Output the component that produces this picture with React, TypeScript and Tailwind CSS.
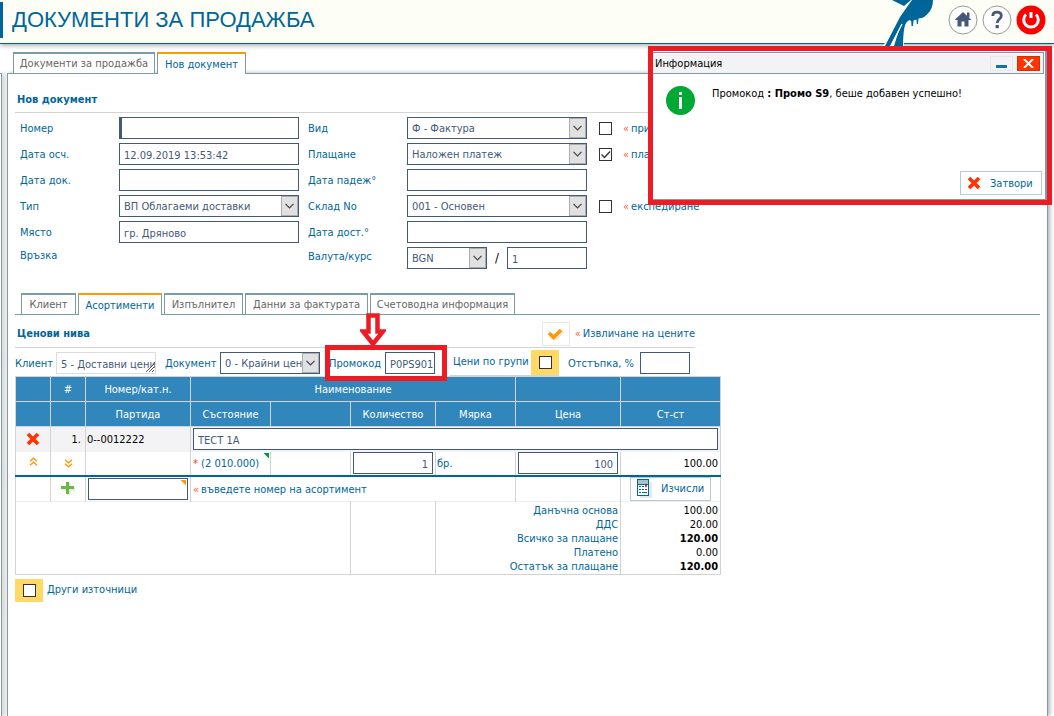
import type { ReactNode } from "react";

const field =
  "h-[22px] border border-[#44597a] bg-white px-1 pt-[2px] text-[11px] text-[#44597a] outline-none";

const formTabs = [
  { label: "Клиент", width: "w-[55px]" },
  { label: "Асортименти", width: "w-[84px]", active: true },
  { label: "Изпълнител", width: "w-[79px]" },
  { label: "Данни за фактурата", width: "w-[123px]" },
  { label: "Счетоводна информация", width: "w-[145px]" },
];

const totals = [
  { label: "Данъчна основа", value: "100.00" },
  { label: "ДДС", value: "20.00" },
  { label: "Всичко за плащане", value: "120.00", bold: true },
  { label: "Платено", value: "0.00" },
  { label: "Остатък за плащане", value: "120.00", bold: true },
];

function Tab({ label, width, active }: { label: string; width: string; active?: boolean }) {
  return (
    <button
      type="button"
      className={`h-[22px] whitespace-nowrap border-x border-t-2 border-x-[#7b9ba8] pt-[2px] text-center ${width} ${
        active
          ? "border-t-[#ff9900] bg-white text-[#006699]"
          : "border-b border-b-[#7b9ba8] border-t-[#7b9ba8] bg-white text-[#666]"
      }`}
    >
      {label}
    </button>
  );
}

function Select({ id, value, width }: { id: string; value: string; width: string }) {
  return (
    <span className={`relative inline-block h-[22px] shrink-0 ${width}`}>
      <select
        id={id}
        className="h-[22px] w-full appearance-none border border-[#44597a] bg-white pt-[3px] pr-4 pl-1 text-[11px] text-[#44597a] outline-none"
      >
        <option>{value}</option>
      </select>
      <span className="pointer-events-none absolute top-px right-px flex h-5 w-[17px] items-center justify-center border border-[#adadad] bg-[#e1e1e1]">
        <svg width="9" height="6" viewBox="0 0 9 6" fill="none" stroke="#444" strokeWidth="1.2">
          <path d="M.5.8l4 4 4-4" />
        </svg>
      </span>
    </span>
  );
}

function Check({ id, checked }: { id: string; checked?: boolean }) {
  return (
    <span className="relative inline-block size-[13px] shrink-0">
      <input
        id={id}
        type="checkbox"
        defaultChecked={checked}
        className="peer block size-[13px] appearance-none border border-[#333] bg-white"
      />
      <svg
        viewBox="0 0 13 13"
        fill="none"
        stroke="#333"
        strokeWidth="1.4"
        className="pointer-events-none absolute inset-0 hidden peer-checked:block"
      >
        <path d="M2.5 6.5l3 3 5.5-6" />
      </svg>
    </span>
  );
}

function Hint({ htmlFor, children }: { htmlFor?: string; children: ReactNode }) {
  return (
    <label htmlFor={htmlFor} className="whitespace-nowrap pt-[2px]">
      <span className="mr-[2px] text-[#ff5a1f]">«</span>
      {children}
    </label>
  );
}

function CrossIcon() {
  return (
    <svg width="15" height="15" viewBox="0 0 15 15" fill="none" strokeWidth="3.6">
      <path d="M3 3l10 10M13 3L3 13" stroke="#e8e8ea" />
      <path d="M2 2l10 10M12 2L2 12" stroke="#ff3300" />
    </svg>
  );
}

function Chevrons({ down }: { down?: boolean }) {
  return (
    <svg
      width="9"
      height="9"
      viewBox="0 0 9 9"
      fill="none"
      stroke="#ff9900"
      strokeWidth="1.4"
      className={down ? "rotate-180" : ""}
    >
      <path d="M1 4.2l3.5-3 3.5 3M1 8.2l3.5-3 3.5 3" />
    </svg>
  );
}

function CalcIcon() {
  return (
    <svg width="15" height="19" viewBox="0 0 15 19" shapeRendering="crispEdges">
      <path d="M3 3h12v16H3z" fill="#e8e8ea" />
      <path d="M0 0h12v17H0z" fill="#006699" />
      <path d="M1 6h10v10H1z" fill="#fff" />
      <path d="M1 1h10v4H1z" fill="#a3c2d3" />
      <path
        d="M2 7h2v1H2zM5 7h2v1H5zM2 10h2v1H2zM5 10h2v1H5zM8 10h2v1H8zM2 13h2v1H2zM5 13h5v1H5z"
        fill="#006699"
      />
      <path d="M8 6h2v2H8z" fill="#ff3300" />
    </svg>
  );
}

function Header() {
  return (
    <header className="relative flex h-11 items-center justify-between border-b border-[#006699] bg-[#fdfff7] pr-2 shadow-[0_1px_5px_rgba(0,0,0,0.4)]">
      <h1 className="mb-1 flex h-9 items-center border-l-[3px] border-[#006699] pl-[9px] font-['Liberation_Sans',Arial,sans-serif] text-[22px] text-[#006699]">
        ДОКУМЕНТИ ЗА ПРОДАЖБА
      </h1>
      <div className="flex items-center gap-1">
        {/* Bird with its tail over the header line */}
        <svg width="56" height="46" viewBox="0 0 56 46" className="mr-2 -mb-[3px]">
          <path d="M3 46L9 36 24 36 24 46z" fill="#fdfff7" />
          <path d="M12 0L24 6 31 0z" fill="#006699" />
          <path
            d="M32 0H53C53 6 51 11 47 14.500 44 17.500 41 18.500 38.500 18.500L38 24 36.800 24 36.500 19.500 33.500 20.500 33 26 31.500 26 31.300 21.500 30 20C27.500 20.500 25.500 23 24.500 27 23.500 32 23 39 23 46H14L20 27 10 46H5L20 17 27 7z"
            fill="#006699"
          />
          <path d="M22 24L11 46" stroke="#fdfff7" strokeWidth="1.200" />
        </svg>
        <button type="button" aria-label="Начало" className="mb-1">
          <svg width="30" height="30" viewBox="0 0 30 30">
            <circle cx="15" cy="15" r="14" fill="#fff" stroke="#999" />
            <path d="M15 7l8.500 8H20.500v6.500h-4v-5h-3v5h-4V15h-3z" fill="#44597a" />
            <path d="M19 7.500h2.500v5H19z" fill="#44597a" />
          </svg>
        </button>
        <button type="button" aria-label="Помощ" className="mb-1">
          <svg width="30" height="30" viewBox="0 0 30 30" fill="none">
            <circle cx="15" cy="15" r="14" fill="#fff" stroke="#999" />
            <path
              d="M10.800 11C10.800 8.500 12.500 7.200 15 7.200S19.300 8.600 19.300 10.800C19.300 14 15.200 14 15.200 18"
              stroke="#44597a"
              strokeWidth="2.800"
            />
            <path d="M13.600 20h3.200v3.200h-3.200z" fill="#44597a" />
          </svg>
        </button>
        <button type="button" aria-label="Изход" className="mb-1">
          <svg width="30" height="30" viewBox="0 0 30 30" fill="none">
            <circle cx="15" cy="15" r="14.500" fill="#f00" />
            <path d="M10 9.500a7.300 7.300 0 1 0 10 0" stroke="#fff" strokeWidth="3" />
            <path d="M15 7v6" stroke="#fff" strokeWidth="3" />
          </svg>
        </button>
      </div>
    </header>
  );
}

function DocumentForm() {
  return (
    <div className="grid w-[680px] auto-rows-[26px] grid-cols-[99px_189px_99px_192px_auto] items-center pt-[2px] pl-[5px] [&>label]:pt-[2px]">
      <label htmlFor="number">Номер</label>
      <input id="number" className={`${field} w-[180px] border-l-[3px]`} />
      <label htmlFor="kind">Вид</label>
      <Select id="kind" value="Ф - Фактура" width="w-[180px]" />
      <div className="flex items-center gap-[11px]">
        <Check id="accept" />
        <Hint htmlFor="accept">приключен</Hint>
      </div>

      <label htmlFor="posted">Дата осч.</label>
      <input id="posted" defaultValue="12.09.2019 13:53:42" className={`${field} w-[180px]`} />
      <label htmlFor="payment">Плащане</label>
      <Select id="payment" value="Наложен платеж" width="w-[180px]" />
      <div className="flex items-center gap-[11px]">
        <Check id="paid" checked />
        <Hint htmlFor="paid">платен</Hint>
      </div>

      <label htmlFor="docDate">Дата док.</label>
      <input id="docDate" className={`${field} w-[180px]`} />
      <label htmlFor="due">Дата падеж°</label>
      <input id="due" className={`${field} w-[180px]`} />
      <div />

      <label htmlFor="type">Тип</label>
      <Select id="type" value="ВП Облагаеми доставки" width="w-[180px]" />
      <label htmlFor="store">Склад No</label>
      <Select id="store" value="001 - Основен" width="w-[180px]" />
      <div className="flex items-center gap-[11px]">
        <Check id="shipping" />
        <Hint htmlFor="shipping">експедиране</Hint>
      </div>

      <label htmlFor="place">Място</label>
      <input id="place" defaultValue="гр. Дряново" className={`${field} w-[180px]`} />
      <label htmlFor="delivery">Дата дост.°</label>
      <input id="delivery" className={`${field} w-[180px]`} />
      <div />

      <span className="pb-1">Връзка</span>
      <div />
      <label htmlFor="currency" className="pb-1">
        Валута/курс
      </label>
      <div className="flex items-center">
        <Select id="currency" value="BGN" width="w-20" />
        <span className="w-5 text-center text-[13px] text-black">/</span>
        <input aria-label="Курс" defaultValue="1" className={`${field} w-20`} />
      </div>
    </div>
  );
}

function PriceLevels() {
  return (
    <div className="w-[680px]">
      <div className="flex h-[33px] items-center justify-between border-b border-[#d3d3d3] pt-[5px]">
        <h2 className="pt-[2px] pl-[2px] font-bold text-[#006699]">Ценови нива</h2>
        <div className="flex items-center gap-[5px]">
          <button
            type="button"
            aria-label="Извличане на цените"
            className="flex h-6 w-7 items-center justify-center border border-[#e8e8ec]"
          >
            <svg width="18" height="14" viewBox="0 0 18 14" fill="none" strokeWidth="3.6">
              <path d="M4 7l4.500 4.500L16 4" stroke="#e8e8ea" />
              <path d="M2 6l4.500 4.500L14 3" stroke="#ff9900" />
            </svg>
          </button>
          <Hint>Извличане на цените</Hint>
        </div>
      </div>
      <div className="flex h-7 items-center whitespace-nowrap pt-[2px]">
        <label htmlFor="client" className="w-[41px] shrink-0 pt-[2px]">
          Клиент
        </label>
        <span className="relative h-[22px] w-[100px] shrink-0">
          <input
            id="client"
            defaultValue="5 - Доставни цени"
            className="h-full w-full border border-[#ddd] pt-[2px] pl-1 text-[#44597a] outline-none"
          />
          <svg
            width="8"
            height="8"
            viewBox="0 0 8 8"
            stroke="#555"
            className="absolute right-[2px] bottom-[2px]"
          >
            <path d="M0 8L8 0V8z" fill="#fff" stroke="none" />
            <path d="M0 8L8 0M3 8L8 3M6 8L8 6" />
          </svg>
        </span>
        <label htmlFor="priceDoc" className="w-16 shrink-0 pt-[2px] pl-[9px]">
          Документ
        </label>
        <Select id="priceDoc" value="0 - Крайни цени" width="w-[100px]" />
        {/* Highlighted promo code */}
        <div className="relative flex h-[22px] w-[130px] shrink-0 items-center pl-[9px]">
          <label htmlFor="promo" className="w-14 pt-[2px]">
            Промокод
          </label>
          <input id="promo" defaultValue="P0PS901" className={`${field} w-[50px] pr-0`} />
          <div className="pointer-events-none absolute -top-[7px] left-[5px] h-9 w-[122px] border-[5px] border-[#ed1c24]" />
          <svg
            width="26"
            height="34"
            viewBox="0 0 26 34"
            className="pointer-events-none absolute -top-[39px] left-[40px]"
          >
            <path
              d="M8.500 2.500h9v16h5.500L13 31 3 18.500h5.500z"
              fill="#fff"
              stroke="#ed1c24"
              strokeWidth="4.500"
            />
          </svg>
        </div>
        <div className="flex h-[26px] shrink-0 items-center border-b border-[#d3d3d3]">
          <label htmlFor="groups" className="w-[81px] pl-[3px]">
            Цени по групи
          </label>
          <span className="flex h-[25px] w-7 items-center justify-center bg-[#ffd966]">
            <Check id="groups" />
          </span>
        </div>
        <label htmlFor="discount" className="w-[81px] shrink-0 pt-[2px] pl-[9px]">
          Отстъпка, %
        </label>
        <input id="discount" className={`${field} w-[50px] shrink-0`} />
      </div>
    </div>
  );
}

function ItemsTable() {
  const head = "border border-[#d3d3d3] pt-[2px] font-normal";
  const side = "border-x border-[#d3d3d3]";
  return (
    <table className="w-[706px] table-fixed border-collapse">
      <colgroup>
        <col className="w-[35px]" />
        <col className="w-[35px]" />
        <col className="w-[105px]" />
        <col className="w-20" />
        <col className="w-20" />
        <col className="w-[85px]" />
        <col className="w-20" />
        <col className="w-[105px]" />
        <col className="w-[100px]" />
      </colgroup>
      <thead className="bg-[#3186bc] text-white">
        <tr className="h-[25px]">
          <th className={head} />
          <th className={head}>#</th>
          <th className={head}>Номер/кат.н.</th>
          <th className={head} colSpan={4}>
            Наименование
          </th>
          <th className={head} />
          <th className={head} />
        </tr>
        <tr className="h-[25px]">
          <th className={head} />
          <th className={head} />
          <th className={head}>Партида</th>
          <th className={head}>Състояние</th>
          <th className={head} />
          <th className={head}>Количество</th>
          <th className={head}>Мярка</th>
          <th className={head}>Цена</th>
          <th className={head}>Ст-ст</th>
        </tr>
      </thead>
      <tbody>
        <tr className="h-[25px] bg-[#f3f3f5] text-black">
          <td className={side}>
            <button type="button" aria-label="Изтрий" className="mx-auto block">
              <CrossIcon />
            </button>
          </td>
          <td className={`${side} pt-[2px] pr-1 text-right`}>1.</td>
          <td className={`${side} pt-[2px] pl-px`}>0--0012222</td>
          <td className={`${side} px-[2px]`} colSpan={6}>
            <input
              aria-label="Наименование"
              defaultValue="ТЕСТ 1А"
              className={`${field} block w-full`}
            />
          </td>
        </tr>
        <tr className="h-6 border-b-2 border-[#006699]">
          <td className={side}>
            <button type="button" aria-label="Нагоре" className="mx-auto block pb-1">
              <Chevrons />
            </button>
          </td>
          <td className={side}>
            <button type="button" aria-label="Надолу" className="mx-auto block">
              <Chevrons down />
            </button>
          </td>
          <td className={side} />
          <td className={`${side} relative whitespace-nowrap pt-[2px] pl-[2px]`}>
            <span className="text-[#ff3300]">*</span> (2 010.000)
            <span className="absolute top-px right-px size-[6px] bg-[#009933] [clip-path:polygon(0_0,100%_0,100%_100%)]" />
          </td>
          <td className={side} />
          <td className={`${side} px-[2px]`}>
            <input
              aria-label="Количество"
              defaultValue="1"
              className={`${field} block w-full text-right`}
            />
          </td>
          <td className={`${side} pt-[2px] pl-px`}>бр.</td>
          <td className={`${side} px-[2px]`}>
            <input
              aria-label="Цена"
              defaultValue="100"
              className={`${field} block w-[100px] text-right`}
            />
          </td>
          <td className={`${side} pt-[2px] pr-[2px] text-right text-black`}>100.00</td>
        </tr>
        <tr className="h-[25px] border-b border-b-[#eee]">
          <td className={side} />
          <td className={side}>
            <button type="button" aria-label="Добави" className="mx-auto block">
              <svg width="15" height="15" viewBox="0 0 15 15">
                <path d="M6 2h4v4h4v4h-4v4H6v-4H2V6h4z" fill="#e8e8ea" />
                <path d="M5 1h3v4h5v3H8v5H5V8H0V5h5z" fill="#6cb744" />
              </svg>
            </button>
          </td>
          <td className={`${side} px-[2px]`}>
            <span className="relative block w-[100px]">
              <input aria-label="Номер на асортимент" className={`${field} block w-full`} />
              <span className="absolute top-[2px] right-[2px] size-[6px] bg-[#ff9900] [clip-path:polygon(0_0,100%_0,100%_100%)]" />
            </span>
          </td>
          <td className={`${side} pt-1 pl-[2px]`} colSpan={4}>
            <Hint>въведете номер на асортимент</Hint>
          </td>
          <td className={side} />
          <td className={side}>
            <button
              type="button"
              className="mx-auto flex h-6 w-[81px] items-center gap-[9px] border border-[#b8c8d8] pl-[6px]"
            >
              <CalcIcon />
              <span className="pt-[2px]">Изчисли</span>
            </button>
          </td>
        </tr>
        {totals.map((t, i) => (
          <tr
            key={t.label}
            className={`h-[14px] leading-[14px] first:h-4 ${i === totals.length - 1 ? "border-b border-b-[#d3d3d3]" : ""} ${
              i === 0 ? "[&>td]:pt-[2px]" : ""
            }`}
          >
            <td className={side} colSpan={5} />
            <td className={side} />
            <td className={`${side} pr-[2px] text-right`} colSpan={2}>
              {t.label}
            </td>
            <td className={`${side} pr-[2px] text-right text-black ${t.bold ? "font-bold" : ""}`}>
              {t.value}
            </td>
          </tr>
        ))}
      </tbody>
    </table>
  );
}

function InfoDialog() {
  return (
    <div
      role="dialog"
      aria-label="Информация"
      className="absolute top-[46px] right-[2px] z-10 h-[159px] w-[404px] border-[5px] border-[#ed1c24] bg-white text-black"
    >
      <div className="flex h-full flex-col border-r-2 border-b border-[#7b9ba8]">
        <div className="mt-px mr-px flex h-[22px] items-center justify-between border-y border-r border-[#7b9ba8] bg-[#f3f3f5] pr-[3px] pl-[2px]">
          <span className="pt-[2px]">Информация</span>
          <div className="flex gap-1">
            <button
              type="button"
              aria-label="Минимизирай"
              className="flex h-[15px] w-[23px] items-end justify-center border border-[#e8e8ec] pb-[2px]"
            >
              <span className="h-[3px] w-[11px] bg-[#1173a8]" />
            </button>
            <button
              type="button"
              aria-label="Затвори прозореца"
              className="flex h-[15px] w-[23px] items-center justify-center border border-[#cc3300] bg-[#ff3300]"
            >
              <svg width="11" height="9" viewBox="0 0 11 9" stroke="#fff" strokeWidth="2">
                <path d="M1 0l9 9M10 0L1 9" />
              </svg>
            </button>
          </div>
        </div>
        <div className="flex flex-1 gap-[17px] pt-3 pl-[13px]">
          <svg width="29" height="29" viewBox="0 0 29 29">
            <circle cx="14.5" cy="14.5" r="14.5" fill="#00a933" />
            <path d="M13 6h3v3h-3zM13 11h3v12h-3z" fill="#fff" />
          </svg>
          <p className="pt-px leading-[14px]">
            Промокод <b>: Промо S9</b>, беше добавен успешно!
          </p>
        </div>
        <div className="flex justify-end pr-[3px] pb-1">
          <button
            type="button"
            className="flex h-6 w-[82px] items-center gap-2 border border-[#b8c8d8] pl-[6px] text-[#006699]"
          >
            <CrossIcon />
            <span className="pt-[2px]">Затвори</span>
          </button>
        </div>
      </div>
    </div>
  );
}

export default function App() {
  return (
    <div className="relative flex min-h-screen flex-col overflow-hidden bg-white font-['DejaVu_Sans_Condensed','DejaVu_Sans',Tahoma,sans-serif] text-[11px] text-[#006699]">
      <Header />
      <InfoDialog />
      <div className="flex flex-1 pt-2">
        {/* Edge of the collapsed side menu */}
        <div className="mt-[21px] w-[2px] border-t border-r border-[#7b9ba8] shadow-[2px_0_4px_rgba(0,0,0,0.4)]" />
        <main className="mr-[6px] ml-[5px] flex flex-1 flex-col">
          <nav className="relative z-[1] -mb-px flex gap-[2px] pl-[6px]">
            <Tab label="Документи за продажба" width="w-[142px]" />
            <Tab label="Нов документ" width="w-[89px]" active />
          </nav>
          <section className="flex-1 border-x border-t border-[#7b9ba8] bg-white px-[7px] shadow-[2px_0_4px_rgba(0,0,0,0.3)]">
            <h2 className="flex h-[39px] w-[680px] items-center border-b border-[#d3d3d3] pt-[14px] pl-[2px] font-bold">
              Нов документ
            </h2>
            <DocumentForm />
            <nav className="mt-[22px] flex gap-[2px] border-b border-[#7b9ba8] pl-[6px] [&>button]:-mb-px">
              {formTabs.map((t) => (
                <Tab key={t.label} {...t} />
              ))}
            </nav>
            <PriceLevels />
            <ItemsTable />
            <div className="mt-1 flex items-center gap-1">
              <span className="flex h-[23px] w-7 items-center justify-center bg-[#ffd966]">
                <Check id="sources" />
              </span>
              <label htmlFor="sources">Други източници</label>
            </div>
          </section>
        </main>
      </div>
    </div>
  );
}
